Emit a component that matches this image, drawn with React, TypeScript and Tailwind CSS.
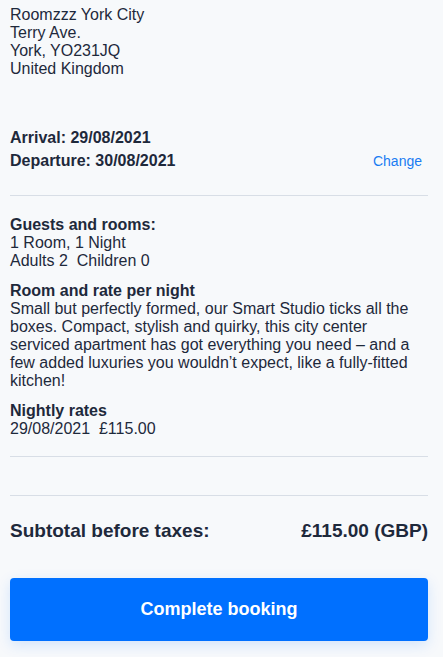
import React from 'react';

const font = { fontFamily: '"Liberation Sans", Arial, sans-serif' };

export default function App() {
  return (
    <div className="min-h-[657px] bg-[#f7f9fb] pl-[10px] pr-[15px] pt-[6px] text-[#1e293b]" style={font}>
      <div className="text-[16px] leading-[18px]">
        <div>Roomzzz York City</div>
        <div>Terry Ave.</div>
        <div>York, YO231JQ</div>
        <div>United Kingdom</div>
      </div>

      <div className="mt-[48px] text-[16px] font-bold leading-[23px]">
        <div>Arrival: 29/08/2021</div>
        <div className="flex items-baseline justify-between">
          <span>Departure: 30/08/2021</span>
          <a className="mr-[6px] text-[14px] font-normal text-[#1a7cf2]" href="#">
            Change
          </a>
        </div>
      </div>

      <div className="mt-[22px] h-px bg-[#d8dee6]" />

      <div className="mt-[20px] text-[16px] leading-[18px]">
        <div className="font-bold">Guests and rooms:</div>
        <div>1 Room, 1 Night</div>
        <div>Adults 2&nbsp;&nbsp;Children 0</div>

        <div className="mt-[12px] font-bold">Room and rate per night</div>
        <p>
          Small but perfectly formed, our Smart Studio ticks all the boxes. Compact, stylish and quirky, this city center
          serviced apartment has got everything you need – and a few added luxuries you wouldn’t expect, like a
          fully-fitted kitchen!
        </p>

        <div className="mt-[12px] font-bold">Nightly rates</div>
        <div>29/08/2021&nbsp;&nbsp;£115.00</div>
      </div>

      <div className="mt-[18px] h-px bg-[#d8dee6]" />
      <div className="mt-[38px] h-px bg-[#d8dee6]" />

      <div className="mt-[23px] flex items-center justify-between text-[19px] font-bold leading-[24px]">
        <span>Subtotal before taxes:</span>
        <span>£115.00 (GBP)</span>
      </div>

      <button className="mt-[35px] flex h-[63px] w-full items-center justify-center rounded-[4px] bg-[#0070ff] text-[18px] font-bold text-white shadow-[0_4px_14px_rgba(0,112,255,0.15)]">
        Complete booking
      </button>
    </div>
  );
}
